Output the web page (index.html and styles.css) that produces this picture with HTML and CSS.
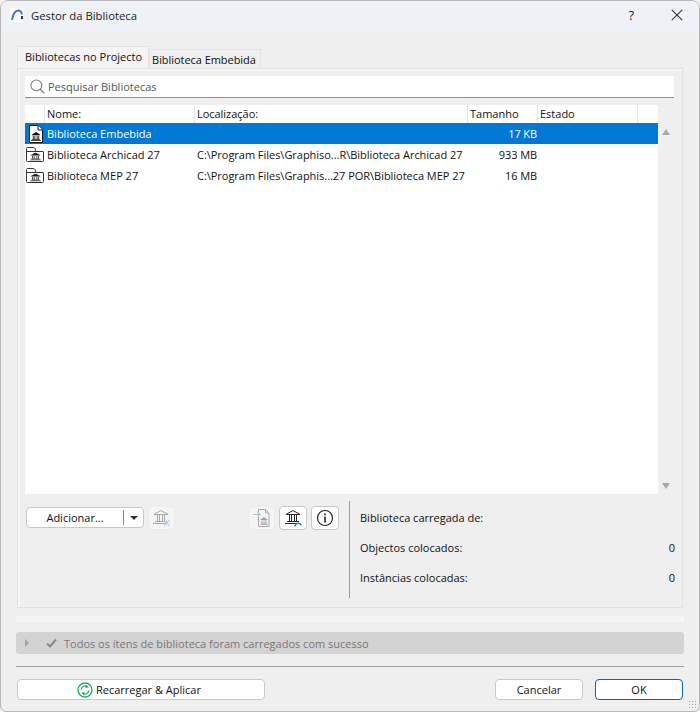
FILE: index.html
```html
<!DOCTYPE html>
<html lang="pt">
<head>
<meta charset="utf-8">
<title>Gestor da Biblioteca</title>
<link rel="stylesheet" href="styles.css">
</head>
<body>
<svg class="defs" width="0" height="0">
  <defs>
    <symbol id="temple" viewBox="0 0 16 16">
      <path d="M1.500 5 8 1.600 14.500 5M1 5.500h14" stroke="currentColor" stroke-width="1" fill="none"/>
      <path d="M4.500 6v6M6.500 6v6M9.500 6v6M11.500 6v6" stroke="currentColor" stroke-width="1" fill="none"/>
      <path d="M2 12.500h12M0 14.500h14" stroke="currentColor" stroke-width="1" fill="none"/>
    </symbol>
    <symbol id="temple-small" viewBox="0 0 13 10" preserveAspectRatio="none">
      <path d="M1 3 6.500 0 12 3v.6H1z" fill="currentColor"/>
      <path d="M3 4.200v3.600M5 4.200v3.600M8 4.200v3.600M10 4.200v3.600" stroke="currentColor" stroke-width="1" fill="none"/>
      <path d="M0 9.500h13M1.500 8.200h10" stroke="currentColor" stroke-width="1" fill="none"/>
    </symbol>
  </defs>
</svg>
<div class="window">
  <header class="titlebar">
    <span class="logo-box">
      <svg width="13" height="12" viewBox="0 0 13 12"><path d="M1 11C2 5 4.500 1.500 7.500 1.500c2 0 3 1.500 3.500 4" fill="none" stroke="#4a72d6" stroke-width="2"/><rect x="10" y="7" width="2" height="3" fill="#1c2f66"/></svg>
    </span>
    <span class="title">Gestor da Biblioteca</span>
    <span class="help">?</span>
    <svg class="close" width="12" height="12" viewBox="0 0 12 12"><path d="M.8.8l10.400 10.400M11.200.8.8 11.200" stroke="#333" stroke-width="1.100"/></svg>
  </header>

  <div class="content">
    <div class="tabs">
      <div class="tab tab-active">Bibliotecas no Projecto</div>
      <div class="tab">Biblioteca Embebida</div>
    </div>

    <section class="panel">
      <div class="search">
        <svg width="15" height="15" viewBox="0 0 16 16"><circle cx="6.800" cy="6.800" r="5.800" fill="none" stroke="#777" stroke-width="1.100"/><path d="m10.900 10.900 4.300 4.300" stroke="#777" stroke-width="1.200"/></svg>
        <span>Pesquisar Bibliotecas</span>
      </div>

      <div class="list-wrap">
        <div class="list">
          <div class="row head">
            <div class="c-icon"></div>
            <div class="c-name">Nome:</div>
            <div class="c-loc">Localização:</div>
            <div class="c-size">Tamanho</div>
            <div class="c-state">Estado</div>
            <div class="c-end"></div>
          </div>
          <div class="row selected">
            <div class="c-icon">
              <svg class="file-ico" width="14" height="18" viewBox="0 0 14 18"><path d="M.500.500h8.500l4.500 4.500v12.500H.500z" fill="#fff" stroke="#111"/><path d="M9 .500V5h4.500" fill="#fff" stroke="#111"/><use href="#temple-small" x="2" y="7" width="10" height="9" color="#111"/></svg>
            </div>
            <div class="c-name">Biblioteca Embebida</div>
            <div class="c-loc"></div>
            <div class="c-size num">17 KB</div>
            <div class="c-state"></div>
          </div>
          <div class="row">
            <div class="c-icon">
              <svg class="folder-ico" width="18" height="15" viewBox="0 0 18 15"><path d="M.500 13.500V1.500q0-1 1-1h6q1 0 1.500 1L10 4.500h7q.5 0 .5.500v8.500q0 1-1 1h-15q-1 0-1-1z" fill="#fff" stroke="#333"/><path d="M.500 4.500H10" stroke="#333" fill="none"/><use href="#temple-small" x="4" y="5.500" width="11" height="8" color="#222"/></svg>
            </div>
            <div class="c-name">Biblioteca Archicad 27</div>
            <div class="c-loc">C:\Program Files\Graphiso...R\Biblioteca Archicad 27</div>
            <div class="c-size num">933 MB</div>
            <div class="c-state"></div>
          </div>
          <div class="row">
            <div class="c-icon">
              <svg class="folder-ico" width="18" height="15" viewBox="0 0 18 15"><path d="M.500 13.500V1.500q0-1 1-1h6q1 0 1.500 1L10 4.500h7q.5 0 .5.500v8.500q0 1-1 1h-15q-1 0-1-1z" fill="#fff" stroke="#333"/><path d="M.500 4.500H10" stroke="#333" fill="none"/><use href="#temple-small" x="4" y="5.500" width="11" height="8" color="#222"/></svg>
            </div>
            <div class="c-name">Biblioteca MEP 27</div>
            <div class="c-loc">C:\Program Files\Graphis...27 POR\Biblioteca MEP 27</div>
            <div class="c-size num">16 MB</div>
            <div class="c-state"></div>
          </div>
        </div>
        <div class="scrollbar">
          <span class="arrow-up"></span>
          <span class="arrow-down"></span>
        </div>
      </div>

      <div class="lower">
        <div class="actions">
          <div class="split-btn">
            <span class="split-label">Adicionar...</span>
            <span class="split-sep"></span>
            <span class="split-caret"></span>
          </div>
          <button class="icon-btn disabled remove">
            <svg width="18" height="18" viewBox="0 0 18 18"><use href="#temple" x="0" y="0" width="16" height="16" color="#a8a8a8"/><path d="m11 11 5.500 6M16.500 11 11 17" stroke="#a9c9ee" stroke-width="1.100"/></svg>
          </button>
          <span class="spacer"></span>
          <button class="icon-btn disabled">
            <svg width="20" height="20" viewBox="0 0 20 20"><path d="M6.500 4V1.500h7l3.500 3.500v13.500H6.500V9" fill="none" stroke="#aaa"/><path d="M13.500 1.500V5H17" fill="none" stroke="#aaa"/><use href="#temple-small" x="8" y="9" width="8" height="8" color="#a0a0a0"/><path d="M1 6.500h7M5.500 4 8 6.500 5.500 9" fill="none" stroke="#9cc3f0" stroke-width="1.200"/></svg>
          </button>
          <button class="icon-btn">
            <svg width="20" height="20" viewBox="0 0 20 20"><use href="#temple" x="2" y="1" width="16" height="16" color="#2a2a2a"/><path d="M12 18.500a3.300 3.300 0 0 1 6.400-1" fill="none" stroke="#2e7bd8" stroke-width="1.500"/></svg>
          </button>
          <button class="icon-btn info">
            <svg width="20" height="20" viewBox="0 0 20 20"><circle cx="10" cy="10" r="7.500" fill="none" stroke="#222" stroke-width="1.200"/><rect x="9.200" y="8.500" width="1.600" height="6" fill="#222"/><rect x="9.200" y="5.500" width="1.600" height="1.800" fill="#222"/></svg>
          </button>
        </div>
        <div class="details">
          <div class="detail"><span>Biblioteca carregada de:</span></div>
          <div class="detail"><span>Objectos colocados:</span><span>0</span></div>
          <div class="detail"><span>Instâncias colocadas:</span><span>0</span></div>
        </div>
      </div>
    </section>

    <div class="stripe"></div>

    <div class="status">
      <span class="status-caret"></span>
      <svg width="11" height="10" viewBox="0 0 11 10"><path d="M1 5.500 4 8.500 10 1.500" fill="none" stroke="#8c8c8c" stroke-width="2"/></svg>
      <span>Todos os ítens de biblioteca foram carregados com sucesso</span>
    </div>

    <hr class="rule">

    <footer class="footer">
      <button class="btn reload">
        <svg width="16" height="16" viewBox="0 0 16 16"><circle cx="8" cy="8" r="7" fill="#fff" stroke="#1fae5e" stroke-width="1.300"/><path d="M4.200 7.500A3.900 3.900 0 0 1 10.500 4.800M11.800 8.500A3.900 3.900 0 0 1 5.500 11.200" fill="none" stroke="#1fae5e" stroke-width="1.300"/><path d="m9 2.600 2.500 2.600-3 .9zM7 13.400l-2.500-2.600 3-.9z" fill="#1fae5e"/></svg>
        Recarregar &amp; Aplicar
      </button>
      <span class="spacer"></span>
      <button class="btn cancel">Cancelar</button>
      <button class="btn ok">OK</button>
    </footer>
  </div>
  <div class="grip"></div>
</div>
</body>
</html>
```

FILE: styles.css
```css
* { box-sizing: border-box; }
html, body { margin: 0; padding: 0; background: #f4f4f4; }
body { width: 700px; height: 712px; overflow: hidden; font-family: "Open Sans", "Noto Sans", sans-serif; font-size: 11px; color: #111; }
.defs { position: absolute; }
.window { position: relative; width: 700px; height: 712px; background: #efefef; border: 1px solid #b8b8b8; border-radius: 8px 8px 6px 6px; overflow: hidden; }
.titlebar { height: 30px; background: #eef2f7; display: flex; align-items: center; padding: 0 0 2px 9px; }
.logo-box { width: 14px; height: 14px; background: #fff; border-radius: 2px; margin-right: 7px; display: flex; align-items: center; justify-content: center; }
.title { font-size: 11.300px; color: #222; flex: 1; }
.help { font-size: 13px; color: #222; margin-right: 37px; }
.close { margin-right: 16px; }

.content { padding: 15px 15px 0 15px; }
.tabs { display: flex; align-items: flex-end; height: 22px; padding-left: 1px; }
.tab { height: 19px; padding: 2px 4px 0 2px; border: 1px solid #e4e4e4; border-bottom: 0; background: #efefef; white-space: nowrap; letter-spacing: -.05px; }
.tab-active { height: 22px; padding: 2px 6px 0 7px; background: #f4f4f4; border-radius: 2px 2px 0 0; letter-spacing: 0; }

.panel { margin-left: 1px; width: 666px; height: 540px; border: 1px solid #e2e2e2; background: #efefef; box-shadow: inset 2px 2px 0 #f6f6f6; padding: 7px 8px 0 7px; }
.search { height: 22px; background: #fff; border-bottom: 1px solid #8e8e8e; display: flex; align-items: center; gap: 3px; padding-left: 5px; color: #555; }

.list-wrap { display: flex; margin-top: 7px; height: 389px; }
.list { width: 633px; background: #fff; }
.row { display: flex; height: 21px; align-items: center; color: #111; }
.head { height: 18px; }
.head > div { height: 18px; line-height: 18px; border-right: 1px solid #e6e6e6; padding-left: 2px; }
.head .c-end { width: 20px; border-right: 0; flex: none; }
.c-icon { width: 20px; flex: none; display: flex; align-items: center; }
.c-name { width: 150px; flex: none; padding-left: 2px; white-space: nowrap; }
.c-loc { width: 273px; flex: none; padding-left: 2px; white-space: nowrap; overflow: hidden; letter-spacing: -.03px; }
.c-size { width: 70px; flex: none; }
.c-state { width: 100px; flex: none; padding-left: 2px; }
.head .c-loc { width: 273px; }
.num { text-align: right; padding-right: 1px; letter-spacing: -.1px; }
.selected { background: #0078d4; color: #fff; }
.file-ico { margin-left: 4px; }
.folder-ico { margin-left: 1px; }

.scrollbar { flex: 1; width: 17px; display: flex; flex-direction: column; justify-content: space-between; align-items: center; padding: 24px 0 5px; }
.arrow-up { width: 0; height: 0; border-left: 4.500px solid transparent; border-right: 4.500px solid transparent; border-bottom: 6px solid #a8a8a8; }
.arrow-down { width: 0; height: 0; border-left: 4.500px solid transparent; border-right: 4.500px solid transparent; border-top: 6px solid #a8a8a8; }

.lower { display: flex; margin-top: 7px; height: 97px; }
.actions { width: 325px; display: flex; align-items: flex-start; padding: 5px 10px 0 1px; gap: 4px; border-right: 1px solid #9a9a9a; }
.split-btn { width: 118px; height: 21px; margin-top: 1px; background: #fff; border: 1px solid #c8c8c8; border-radius: 4px; display: flex; align-items: center; }
.split-label { width: 96px; text-align: center; color: #111; }
.split-sep { width: 1px; height: 15px; background: #888; }
.split-caret { margin-left: 6px; width: 0; height: 0; border-left: 4px solid transparent; border-right: 4px solid transparent; border-top: 4px solid #333; }
.spacer { flex: 1; }
.icon-btn { width: 28px; height: 24px; padding: 0; background: #fff; border: 1px solid #c8c8c8; border-radius: 4px; display: flex; align-items: center; justify-content: center; }
.icon-btn.disabled { width: 27px; background: #f5f5f5; border-color: #ececec; }
.details { flex: 1; margin-right: -1px; padding: 1px 0 0 10px; }
.detail { display: flex; justify-content: space-between; height: 30px; align-items: center; }

.stripe { height: 6px; margin-top: 8px; width: 668px; background: #f6f6f6; }
.status { margin-top: 10px; width: 668px; height: 22px; background: #d3d3d3; border-radius: 3px; display: flex; align-items: center; gap: 7px; color: #7a7478; padding-left: 9px; }
.status-caret { width: 0; height: 0; border-top: 4px solid transparent; border-bottom: 4px solid transparent; border-left: 4px solid #a4a4a4; margin-right: 10px; }
.rule { margin: 12px 0 0; width: 668px; border: 0; border-top: 1px solid #9e9e9e; height: 0; }
.footer { display: flex; width: 666px; margin: 12px 0 0 1px; gap: 12px; }
.btn { height: 21px; padding: 0; background: #fff; border: 1px solid #c8c8c8; border-radius: 4px; font: inherit; color: #111; display: flex; align-items: center; justify-content: center; gap: 3px; }
.reload { width: 248px; padding-right: 4px; }
.cancel, .ok { width: 88px; }
.ok { border-color: #0067c0; }
.grip { position: absolute; right: 3px; bottom: 3px; width: 8px; height: 8px; background-image: radial-gradient(#aaa 1px, transparent 1px); background-size: 3px 3px; }
```
